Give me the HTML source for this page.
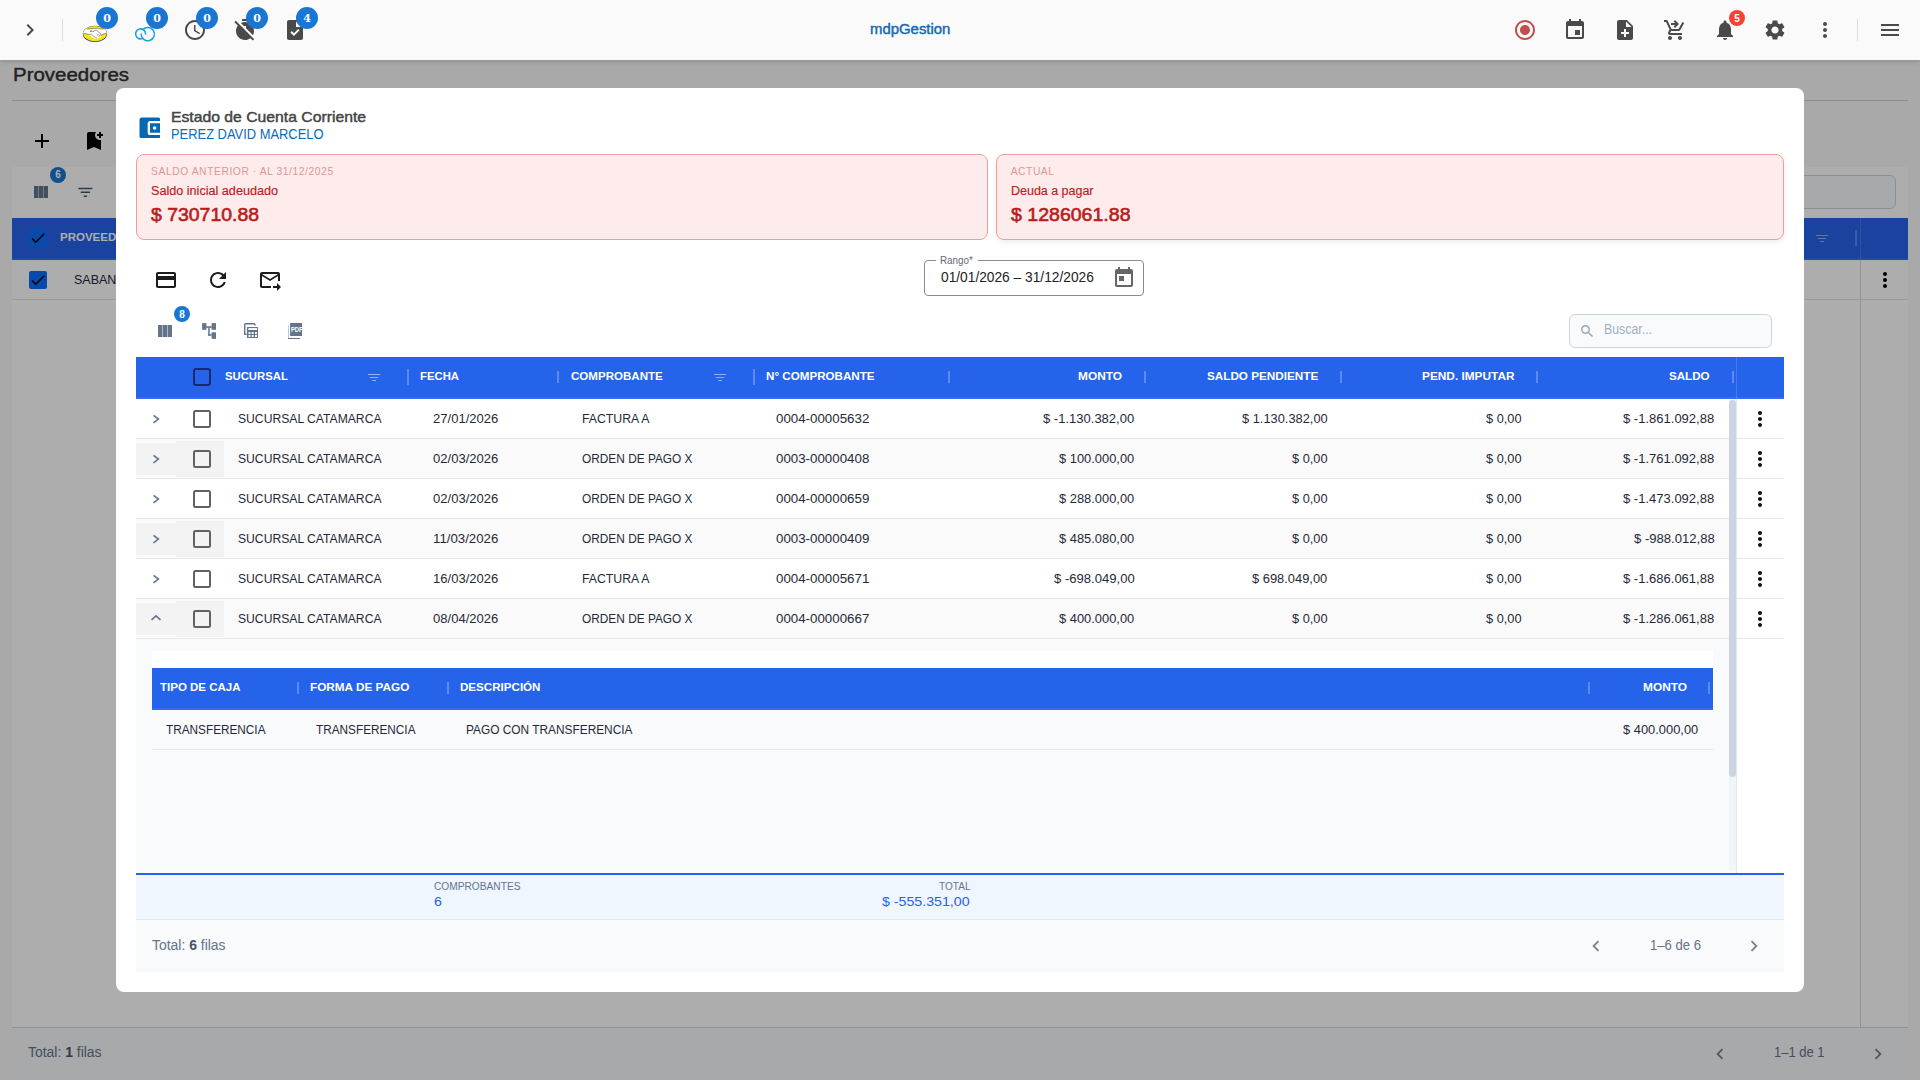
<!DOCTYPE html>
<html lang="es"><head><meta charset="utf-8"><title>mdpGestion - Proveedores</title>
<style>
html,body{margin:0;padding:0}
body{width:1920px;height:1080px;overflow:hidden;position:relative;background:#fafafa;font-family:"Liberation Sans",sans-serif;}
.t{position:absolute;white-space:nowrap;margin:0;padding:0;transform-origin:0 50%}
.b{position:absolute;box-sizing:border-box;display:block}
</style></head><body>
<div id="page">
<div class="t" style="left:12.80px;top:64px;font-size:18.5px;line-height:21px;color:#333;transform:scaleX(1.1059);-webkit-text-stroke:0.42px #333;">Proveedores</div>
<div class="b" style="left:12px;top:100px;width:1896px;height:1px;background:#cfcfcf;"></div>
<svg class="b" style="left:30px;top:129px;" width="24" height="24" viewBox="0 0 24 24" fill="#000"><path d="M19 13h-6v6h-2v-6H5v-2h6V5h2v6h6v2z"/></svg>
<svg class="b" style="left:82px;top:129px;" width="24" height="24" viewBox="0 0 24 24" fill="#000"><path d="M21 7h-2v2h-2V7h-2V5h2V3h2v2h2v2zm-2 14l-7-3-7 3V5c0-1.1.9-2 2-2h7c-.63.84-1 1.87-1 3 0 2.76 2.24 5 5 5 .34 0 .68-.03 1-.1V21z"/></svg>
<div class="b" style="left:12px;top:167px;width:1896px;height:51px;background:#ffffff;"></div>
<svg class="b" style="left:34px;top:186px" width="14" height="12" viewBox="0 0 14 12"><rect width="4.4" height="12" fill="#64748b"/><rect x="4.8" width="4.4" height="12" fill="#64748b"/><rect x="9.6" width="4.4" height="12" fill="#64748b"/></svg>
<div class="b" style="left:50px;top:166.7px;width:16px;height:16px;background:#1976d2;border-radius:8px;"></div>
<div class="t" style="left:55.30px;top:169px;font-size:10px;line-height:11px;color:#fff;font-weight:700;">6</div>
<svg class="b" style="left:75.7px;top:182.7px;" width="18.7" height="18.7" viewBox="0 0 24 24" fill="#475569"><path d="M10 18h4v-2h-4v2zM3 6v2h18V6H3zm3 7h12v-2H6v2z"/></svg>
<div class="b" style="left:1694px;top:175px;width:202px;height:34px;background:#f8fafc;border:1px solid #cbd5e1;border-radius:6px;"></div>
<div class="b" style="left:12px;top:218px;width:1896px;height:42px;background:#2563eb;"></div>
<div class="b" style="left:12px;top:258px;width:1896px;height:2px;background:rgba(255,255,255,.07);"></div>
<div class="b" style="left:29px;top:229px;width:18px;height:18px;background:#0d6efd;border-radius:2px;"></div>
<svg class="b" style="left:29px;top:229px;" width="18" height="18" viewBox="0 0 24 24" fill="#000"><path d="M9 16.17L4.83 12l-1.42 1.41L9 19 21 7l-1.410-1.410z"/></svg>
<div class="t" style="left:60.00px;top:231px;font-size:11px;line-height:12px;color:#fff;font-weight:700;transform:scaleX(1.0456);">PROVEEDOR</div>
<svg class="b" style="left:1816px;top:235px" width="13" height="8" viewBox="0 0 13 8" fill="rgba(255,255,255,.5)"><rect x="0" y="0" width="12.2" height="1"/><rect x="1.8" y="3" width="8.4" height="1"/><rect x="4.2" y="6" width="3.8" height="1"/></svg>
<div class="b" style="left:1855px;top:230px;width:2px;height:16px;background:rgba(255,255,255,.25);"></div>
<div class="b" style="left:1860px;top:218px;width:1px;height:42px;background:rgba(255,255,255,.12);"></div>
<div class="b" style="left:12px;top:299px;width:1896px;height:1px;background:#dde3ea;"></div>
<div class="b" style="left:29px;top:271px;width:18px;height:18px;background:#0d6efd;border-radius:2px;"></div>
<svg class="b" style="left:29px;top:271px;" width="18" height="18" viewBox="0 0 24 24" fill="#000"><path d="M9 16.17L4.83 12l-1.42 1.41L9 19 21 7l-1.410-1.410z"/></svg>
<div class="t" style="left:74.00px;top:273px;font-size:12px;line-height:14px;color:#1f2937;transform:scaleX(1.0401);">SABANA S.A.</div>
<div class="b" style="left:1860px;top:260px;width:1px;height:768px;background:#d5dbe3;"></div>
<svg class="b" style="left:1872.5px;top:267.5px;" width="24" height="24" viewBox="0 0 24 24" fill="#000"><path d="M12 8c1.1 0 2-.9 2-2s-.9-2-2-2-2 .9-2 2 .9 2 2 2zm0 2c-1.1 0-2 .9-2 2s.9 2 2 2 2-.9 2-2-.9-2-2-2zm0 6c-1.1 0-2 .9-2 2s.9 2 2 2 2-.9 2-2-.9-2-2-2z"/></svg>
<div class="b" style="left:12px;top:260px;width:1896px;height:39px;background:#ffffff;z-index:-1;"></div>
<div class="b" style="left:12px;top:300px;width:1896px;height:727px;background:#ffffff;z-index:-1;"></div>
<div class="b" style="left:12px;top:1027px;width:1896px;height:1px;background:#d5dbe3;"></div>
<div class="b" style="left:12px;top:1028px;width:1896px;height:52px;background:#f8fafc;z-index:-1;"></div>
<div class="t" style="left:27.80px;top:1044px;font-size:14px;line-height:16px;color:#64748b;transform:scaleX(0.9943);">Total: <b style="color:#475569">1</b> filas</div>
<svg class="b" style="left:1709px;top:1043px;" width="22" height="22" viewBox="0 0 24 24" fill="#7b8088"><path d="M15.41 7.41L14 6l-6 6 6 6 1.41-1.41L10.83 12z"/></svg>
<div class="t" style="left:1774.00px;top:1044px;font-size:14px;line-height:16px;color:#64748b;transform:scaleX(0.9266);">1–1 de 1</div>
<svg class="b" style="left:1867px;top:1043px;" width="22" height="22" viewBox="0 0 24 24" fill="#7b8088"><path d="M10 6L8.59 7.41 13.17 12l-4.58 4.59L10 18l6-6z"/></svg>
</div>
<div class="b" style="left:0px;top:0px;width:1920px;height:1080px;background:rgba(0,0,0,.32);"></div>
<div class="b" style="left:0px;top:0px;width:1920px;height:60px;background:#fafafa;box-shadow:0 1.5px 4px rgba(0,0,0,.14);"></div>
<svg class="b" style="left:18px;top:18px;" width="24" height="24" viewBox="0 0 24 24" fill="#4a4a4a"><path d="M10 6L8.59 7.41 13.17 12l-4.58 4.59L10 18l6-6z"/></svg>
<div class="b" style="left:62px;top:19px;width:1px;height:22px;background:#dcdcdc;"></div>
<svg class="b" style="left:80px;top:22px" width="30" height="24" viewBox="80 22 30 24">
<defs><clipPath id="mpc"><ellipse cx="94.950" cy="33.600" rx="11.700" ry="7.700"/></clipPath></defs>
<ellipse cx="94.950" cy="33.950" rx="12.100" ry="8.100" fill="#2a2f8a"/>
<ellipse cx="94.950" cy="33.600" rx="11.700" ry="7.700" fill="#fbe40a"/>
<g clip-path="url(#mpc)">
<path d="M82.480 29.330 L87.150 29.130 L92.070 28.560 L94.150 28.350 L98.300 28.350 L100.890 28.950 L103.480 29.130 L107.370 29.330 L107.370 32.960 L101.930 34.520 L100.890 36.590 L96.740 39.060 L94.150 38.670 L88.440 34.520 L83.780 33.220 L82.480 33.090Z" fill="#fff"/>
<path d="M90 31.410 L93.890 31.410 L94.670 30.370 L96.740 30.370 L100.890 34 L101.280 35.560M91.560 29.720 L90.780 31.410M88.190 34.390 L91.560 34.260 L95.190 37.630 L97 38.020M97.520 36.200 L98.300 34.130M98.950 36.720 L100.110 34.910M83.780 33.270 L88.190 34.390M101.280 35.560 L101.930 34.520 L106.850 33.020M87.150 29.130 L92.070 28.560 L94.150 28.350 L98.300 28.350 L100.890 28.950 L103.480 29.130" stroke="#55584a" stroke-width=".600" fill="none" stroke-linejoin="round"/>
</g></svg>
<svg class="b" style="left:132px;top:24px" width="26" height="20" viewBox="132 24 26 20" fill="none" stroke="#1a9fe0" stroke-width="1.550" stroke-linecap="round">
<path d="M142.740 38.420A5 5 0 1 1 145.600 33.900"/><path d="M141.150 34.100A6.650 6.650 0 1 0 142.990 29.510"/></svg>
<svg class="b" style="left:183px;top:18px;" width="24" height="24" viewBox="0 0 24 24" fill="#4a4a4a"><path d="M11.99 2C6.47 2 2 6.48 2 12s4.47 10 9.99 10C17.52 22 22 17.52 22 12S17.52 2 11.99 2zM12 20c-4.42 0-8-3.58-8-8s3.58-8 8-8 8 3.58 8 8-3.58 8-8 8zm.5-13H11v6l5.25 3.15.75-1.23-4.5-2.67z"/></svg>
<svg class="b" style="left:233px;top:18px;" width="24" height="24" viewBox="0 0 24 24" fill="#4a4a4a"><path d="M9 1h6v2H9zM13 8v2.17l6.980 6.980C20.630 15.910 21 14.500 21 13c0-2.120-.74-4.070-1.970-5.610l1.420-1.420c-.43-.51-.9-.99-1.410-1.410l-1.420 1.420C16.070 4.740 14.120 4 12 4c-1.500 0-2.910.37-4.150 1.020L10.830 8H13zM2.810 2.810L1.390 4.220l3.400 3.400C3.670 9.120 3 10.980 3 13c0 4.970 4.020 9 9 9 2.020 0 3.880-.67 5.380-1.790l2.400 2.400 1.410-1.410L2.810 2.810z"/></svg>
<svg class="b" style="left:283px;top:18px;" width="24" height="24" viewBox="0 0 24 24" fill="#4a4a4a"><path d="M14 2H6c-1.1 0-1.99.9-1.99 2L4 20c0 1.1.89 2 1.99 2H18c1.1 0 2-.9 2-2V8l-6-6zm-3.06 16L7.4 14.46l1.41-1.41 2.12 2.12 4.24-4.24 1.41 1.41L10.94 18zM13 9V3.5L18.5 9H13z"/></svg>
<div class="b" style="left:96px;top:7px;width:22px;height:22px;background:#1976d2;border-radius:11px;"></div>
<div class="t" style="left:96px;top:8px;width:22px;height:22px;line-height:22px;text-align:center;font-family:'DejaVu Serif',serif;font-weight:700;font-size:11px;color:#fff">0</div>
<div class="b" style="left:146px;top:7px;width:22px;height:22px;background:#1976d2;border-radius:11px;"></div>
<div class="t" style="left:146px;top:8px;width:22px;height:22px;line-height:22px;text-align:center;font-family:'DejaVu Serif',serif;font-weight:700;font-size:11px;color:#fff">0</div>
<div class="b" style="left:196px;top:7px;width:22px;height:22px;background:#1976d2;border-radius:11px;"></div>
<div class="t" style="left:196px;top:8px;width:22px;height:22px;line-height:22px;text-align:center;font-family:'DejaVu Serif',serif;font-weight:700;font-size:11px;color:#fff">0</div>
<div class="b" style="left:246px;top:7px;width:22px;height:22px;background:#1976d2;border-radius:11px;"></div>
<div class="t" style="left:246px;top:8px;width:22px;height:22px;line-height:22px;text-align:center;font-family:'DejaVu Serif',serif;font-weight:700;font-size:11px;color:#fff">0</div>
<div class="b" style="left:296px;top:7px;width:22px;height:22px;background:#1976d2;border-radius:11px;"></div>
<div class="t" style="left:296px;top:8px;width:22px;height:22px;line-height:22px;text-align:center;font-family:'DejaVu Serif',serif;font-weight:700;font-size:11px;color:#fff">4</div>
<div class="t" style="left:869.80px;top:21px;font-size:14px;line-height:16px;color:#1068b4;transform:scaleX(1.0651);-webkit-text-stroke:0.4px #1068b4;">mdpGestion</div>
<svg class="b" style="left:1513px;top:18px;" width="24" height="24" viewBox="0 0 24 24" fill="#c0504f"><path d="M12 7c-2.76 0-5 2.24-5 5s2.24 5 5 5 5-2.24 5-5-2.24-5-5-5zm0-5C6.48 2 2 6.48 2 12s4.48 10 10 10 10-4.48 10-10S17.52 2 12 2zm0 18c-4.42 0-8-3.58-8-8s3.58-8 8-8 8 3.58 8 8-3.58 8-8 8z"/></svg>
<svg class="b" style="left:1563px;top:18px;" width="24" height="24" viewBox="0 0 24 24" fill="#4a4a4a"><path d="M17 12h-5v5h5v-5zM16 1v2H8V1H6v2H5c-1.11 0-1.99.9-1.99 2L3 19c0 1.1.89 2 2 2h14c1.1 0 2-.9 2-2V5c0-1.1-.9-2-2-2h-1V1h-2zm3 18H5V8h14v11z"/></svg>
<svg class="b" style="left:1613px;top:18px;" width="24" height="24" viewBox="0 0 24 24" fill="#4a4a4a"><path d="M14 2H6c-1.1 0-1.99.9-1.99 2L4 20c0 1.1.89 2 1.99 2H18c1.1 0 2-.9 2-2V8l-6-6zm2 14h-3v3h-2v-3H8v-2h3v-3h2v3h3v2zm-3-7V3.5L18.5 9H13z"/></svg>
<svg class="b" style="left:1663px;top:18px;" width="24" height="24" viewBox="0 0 24 24" fill="#4a4a4a"><path d="M7 18c-1.1 0-1.99.9-1.99 2S5.9 22 7 22s2-.9 2-2-.9-2-2-2zm10 0c-1.1 0-1.99.9-1.99 2s.89 2 1.99 2 2-.9 2-2-.9-2-2-2zm-9.83-3.25l.03-.12.9-1.63h7.45c.75 0 1.41-.41 1.75-1.03l3.86-7.01L19.42 4l-3.87 7H8.53L4.27 2H1v2h2l3.6 7.59-1.35 2.44C4.52 15.37 5.48 17 7 17h12v-2H7.42c-.14 0-.25-.11-.25-.25zM12 2l4 4-4 4-1.41-1.41L12.17 7H8V5h4.17l-1.59-1.59L12 2z"/></svg>
<svg class="b" style="left:1713px;top:18px;" width="24" height="24" viewBox="0 0 24 24" fill="#4a4a4a"><path d="M12 22c1.1 0 2-.9 2-2h-4c0 1.1.89 2 2 2zm6-6v-5c0-3.07-1.64-5.64-4.5-6.32V4c0-.83-.67-1.5-1.5-1.5s-1.5.67-1.5 1.5v.68C7.63 5.36 6 7.92 6 11v5l-2 2v1h16v-1l-2-2z"/></svg>
<div class="b" style="left:1729px;top:10px;width:16px;height:16px;background:#f44336;border-radius:8px;"></div>
<div class="t" style="left:1734.30px;top:13px;font-size:10px;line-height:11px;color:#fff;font-weight:700;">5</div>
<svg class="b" style="left:1763px;top:18px;" width="24" height="24" viewBox="0 0 24 24" fill="#4a4a4a"><path d="M19.14 12.94c.04-.3.06-.61.06-.94 0-.32-.02-.64-.07-.94l2.03-1.58c.18-.14.23-.41.12-.61l-1.92-3.32c-.12-.22-.37-.29-.59-.22l-2.39.96c-.5-.38-1.03-.7-1.62-.94l-.36-2.54c-.04-.24-.24-.41-.48-.41h-3.84c-.24 0-.43.17-.47.41l-.36 2.54c-.59.24-1.13.57-1.62.94l-2.39-.96c-.22-.08-.47 0-.59.22L2.74 8.87c-.12.21-.08.47.12.61l2.03 1.58c-.05.3-.09.63-.09.94s.02.64.07.94l-2.03 1.58c-.18.14-.23.41-.12.61l1.92 3.32c.12.22.37.29.59.22l2.39-.96c.5.38 1.03.7 1.62.94l.36 2.54c.05.24.24.41.48.41h3.84c.24 0 .44-.17.47-.41l.36-2.54c.59-.24 1.13-.56 1.62-.94l2.39.96c.22.08.47 0 .59-.22l1.92-3.32c.12-.22.07-.47-.12-.61l-2.01-1.58zM12 15.6c-1.98 0-3.6-1.62-3.6-3.6s1.620-3.6 3.6-3.6 3.6 1.62 3.6 3.6-1.62 3.6-3.6 3.6z"/></svg>
<svg class="b" style="left:1813px;top:18px;" width="24" height="24" viewBox="0 0 24 24" fill="#4a4a4a"><path d="M12 8c1.1 0 2-.9 2-2s-.9-2-2-2-2 .9-2 2 .9 2 2 2zm0 2c-1.1 0-2 .9-2 2s.9 2 2 2 2-.9 2-2-.9-2-2-2zm0 6c-1.1 0-2 .9-2 2s.9 2 2 2 2-.9 2-2-.9-2-2-2z"/></svg>
<div class="b" style="left:1857px;top:19px;width:1px;height:22px;background:#dcdcdc;"></div>
<svg class="b" style="left:1878px;top:18px;" width="24" height="24" viewBox="0 0 24 24" fill="#4a4a4a"><path d="M3 18h18v-2H3v2zm0-5h18v-2H3v2zm0-7v2h18V6H3z"/></svg>
<div class="b" style="left:116px;top:88px;width:1688px;height:904px;background:#ffffff;border-radius:8px;"></div>
<div class="b" style="left:136px;top:114px;width:24px;height:24px;overflow:hidden">
<svg class="b" style="left:0px;top:-0.5px;" width="28" height="28" viewBox="0 0 24 24" fill="#0568b3"><path d="M21 18v1c0 1.1-.9 2-2 2H5c-1.11 0-2-.9-2-2V5c0-1.1.89-2 2-2h14c1.1 0 2 .9 2 2v1h-9c-1.11 0-2 .9-2 2v8c0 1.1.89 2 2 2h9zm-9-2h10V8H12v8zm4-2.5c-.83 0-1.5-.67-1.5-1.5s.67-1.5 1.5-1.5 1.5.67 1.500 1.5-.67 1.5-1.500 1.5z"/></svg>
</div>
<div class="t" style="left:170.80px;top:108px;font-size:15px;line-height:17px;color:#444;transform:scaleX(1.0487);-webkit-text-stroke:0.45px #444;">Estado de Cuenta Corriente</div>
<div class="t" style="left:171.00px;top:126px;font-size:14px;line-height:16px;color:#0a6bb8;transform:scaleX(0.9218);">PEREZ DAVID MARCELO</div>
<div class="b" style="left:136px;top:154px;width:852px;height:86px;background:#feebeb;border:1px solid #f29d9d;border-radius:8px;"></div>
<div class="b" style="left:996px;top:154px;width:788px;height:86px;background:#feebeb;border:1px solid #f29d9d;border-radius:8px;box-shadow:0 2px 6px rgba(0,0,0,.08);"></div>
<div class="t" style="left:151.10px;top:166px;font-size:10.3px;line-height:11px;color:#db9797;letter-spacing:0.566px;">SALDO ANTERIOR · AL 31/12/2025</div>
<div class="t" style="left:151.10px;top:184px;font-size:12px;line-height:14px;color:#b91c1c;transform:scaleX(1.0516);-webkit-text-stroke:0.15px #b91c1c;">Saldo inicial adeudado</div>
<div class="t" style="left:151.20px;top:204px;font-size:18.5px;line-height:21px;color:#b91c1c;transform:scaleX(1.0498);-webkit-text-stroke:0.6px #b91c1c;">$ 730710.88</div>
<div class="t" style="left:1010.70px;top:166px;font-size:10.3px;line-height:11px;color:#db9797;letter-spacing:0.535px;">ACTUAL</div>
<div class="t" style="left:1010.70px;top:184px;font-size:12px;line-height:14px;color:#b91c1c;transform:scaleX(1.0392);-webkit-text-stroke:0.15px #b91c1c;">Deuda a pagar</div>
<div class="t" style="left:1010.80px;top:204px;font-size:18.5px;line-height:21px;color:#b91c1c;transform:scaleX(1.0559);-webkit-text-stroke:0.6px #b91c1c;">$ 1286061.88</div>
<svg class="b" style="left:154px;top:268px;" width="24" height="24" viewBox="0 0 24 24" fill="#1c1c1c"><path d="M20 4H4c-1.11 0-1.99.89-1.99 2L2 18c0 1.11.89 2 2 2h16c1.11 0 2-.89 2-2V6c0-1.11-.89-2-2-2zm0 14H4v-6h16v6zm0-10H4V6h16v2z"/></svg>
<svg class="b" style="left:206px;top:268px;" width="24" height="24" viewBox="0 0 24 24" fill="#1c1c1c"><path d="M17.65 6.35C16.2 4.9 14.21 4 12 4c-4.42 0-7.99 3.58-7.99 8s3.57 8 7.99 8c3.73 0 6.84-2.55 7.73-6h-2.08c-.82 2.33-3.04 4-5.65 4-3.31 0-6-2.69-6-6s2.69-6 6-6c1.66 0 3.14.69 4.22 1.78L13 11h7V4l-2.35 2.35z"/></svg>
<svg class="b" style="left:258px;top:268px;" width="24" height="24" viewBox="0 0 24 24" fill="#1c1c1c"><path d="M20 4H4c-1.1 0-2 .9-2 2v12c0 1.1.9 2 2 2h9v-2H4V8l8 5 8-5v5h2V6c0-1.1-.9-2-2-2zm-8 7L4 6h16l-8 5zm7 4l4 4-4 4v-3h-4v-2h4v-3z"/></svg>
<div class="b" style="left:924px;top:260px;width:220px;height:36px;border:1px solid #8a8a8a;border-radius:4px;"></div>
<div class="b" style="left:936px;top:259px;width:42px;height:3px;background:#fff;"></div>
<div class="t" style="left:940.30px;top:254px;font-size:10.5px;line-height:12px;color:#5f6775;transform:scaleX(0.9335);">Rango*</div>
<div class="t" style="left:940.80px;top:269px;font-size:14px;line-height:16px;color:#222;transform:scaleX(0.9814);">01/01/2026 – 31/12/2026</div>
<svg class="b" style="left:1112px;top:266px;" width="24" height="24" viewBox="0 0 24 24" fill="#666"><path d="M19 3h-1V1h-2v2H8V1H6v2H5c-1.11 0-1.99.9-1.99 2L3 19c0 1.1.89 2 2 2h14c1.1 0 2-.9 2-2V5c0-1.1-.9-2-2-2zm0 16H5V8h14v11zM7 10h5v5H7z"/></svg>
<svg class="b" style="left:158px;top:325px" width="14" height="12" viewBox="0 0 14 12"><rect width="4.4" height="12" fill="#64748b"/><rect x="4.8" width="4.4" height="12" fill="#64748b"/><rect x="9.6" width="4.4" height="12" fill="#64748b"/></svg>
<div class="b" style="left:174px;top:306px;width:16px;height:16px;background:#1976d2;border-radius:8px;"></div>
<div class="t" style="left:179.30px;top:309px;font-size:10px;line-height:11px;color:#fff;font-weight:700;">8</div>
<svg class="b" style="left:202px;top:323px" width="14" height="16" viewBox="0 0 14 16" fill="#64748b">
<rect x="0.100" y="0.100" width="4.300" height="6.700"/><rect x="9.600" y="0.100" width="4.400" height="6.700"/><rect x="9.600" y="9.300" width="4.400" height="6.500"/>
<rect x="4.300" y="3.200" width="5.400" height="1.700"/><rect x="6.200" y="4.800" width="1.500" height="7.900"/><rect x="6.200" y="11.100" width="3.500" height="1.600"/></svg>
<svg class="b" style="left:244px;top:323px" width="14" height="15" viewBox="0 0 14 15">
<path d="M2.500 11.300H.7V1.500A.8.800 0 0 1 1.500.7h8.500a1 1 0 0 1 1 1v.9" fill="none" stroke="#64748b" stroke-width="1.400"/>
<rect x="2.900" y="4" width="11.100" height="11" rx=".6" fill="#64748b"/>
<rect x="4.400" y="5.100" width="8.700" height="1.900" fill="#fff"/>
<rect x="4.500" y="9.100" width="2" height="1.900" fill="#fff"/><rect x="7.700" y="9.100" width="2" height="1.900" fill="#fff"/><rect x="11" y="9.100" width="2" height="1.900" fill="#fff"/>
<rect x="4.500" y="12" width="2" height="2" fill="#fff"/><rect x="7.700" y="12" width="2" height="2" fill="#fff"/><rect x="11" y="12" width="2" height="2" fill="#fff"/></svg>
<svg class="b" style="left:288px;top:323px;overflow:hidden" width="14" height="16" viewBox="0 0 14 16">
<rect x="2.100" y="0" width="11.900" height="13" fill="#64748b"/>
<rect x="0" y="3" width=".7" height="13" fill="#9db4d0"/><rect x="0" y="15" width="12" height="1" fill="#64748b"/>
<text x="3" y="9" font-family="Liberation Sans, sans-serif" font-size="7" font-weight="700" fill="#fff" textLength="11.600" lengthAdjust="spacingAndGlyphs">PDF</text></svg>
<div class="b" style="left:1569px;top:314px;width:203px;height:34px;background:#f8fafc;border:1px solid #cbd5e1;border-radius:6px;"></div>
<svg class="b" style="left:1579.3px;top:322.6px;" width="16.5" height="16.5" viewBox="0 0 24 24" fill="#94a3b8"><path d="M15.5 14h-.79l-.28-.27C15.41 12.59 16 11.11 16 9.5 16 5.91 13.09 3 9.5 3S3 5.91 3 9.5 5.91 16 9.5 16c1.61 0 3.09-.59 4.23-1.57l.27.28v.79l5 4.990L20.49 19l-4.990-5zm-6 0C7.01 14 5 11.99 5 9.5S7.01 5 9.5 5 14 7.01 14 9.5 11.99 14 9.500 14z"/></svg>
<div class="t" style="left:1604.30px;top:321px;font-size:14px;line-height:16px;color:#a3afc0;transform:scaleX(0.8812);">Buscar...</div>
<div class="b" style="left:136px;top:357px;width:1648px;height:42px;background:#2563eb;"></div>
<div class="b" style="left:1736px;top:357px;width:1px;height:42px;background:rgba(255,255,255,.15);"></div>
<div class="b" style="left:193px;top:368px;width:18px;height:18px;border:2px solid #172b6b;border-radius:3px;"></div>
<div class="t" style="left:224.50px;top:370px;font-size:11px;line-height:12px;color:#fff;font-weight:700;transform:scaleX(1.0277);">SUCURSAL</div>
<div class="t" style="left:420.30px;top:370px;font-size:11px;line-height:12px;color:#fff;font-weight:700;transform:scaleX(1.0293);">FECHA</div>
<div class="t" style="left:570.70px;top:370px;font-size:11px;line-height:12px;color:#fff;font-weight:700;transform:scaleX(1.0505);">COMPROBANTE</div>
<div class="t" style="left:765.70px;top:370px;font-size:11px;line-height:12px;color:#fff;font-weight:700;transform:scaleX(1.0566);">N° COMPROBANTE</div>
<div class="t" style="left:1078.40px;top:370px;font-size:11px;line-height:12px;color:#fff;font-weight:700;transform:scaleX(1.0802);">MONTO</div>
<div class="t" style="left:1207.10px;top:370px;font-size:11px;line-height:12px;color:#fff;font-weight:700;transform:scaleX(1.0640);">SALDO PENDIENTE</div>
<div class="t" style="left:1421.90px;top:370px;font-size:11px;line-height:12px;color:#fff;font-weight:700;transform:scaleX(1.0760);">PEND. IMPUTAR</div>
<div class="t" style="left:1668.60px;top:370px;font-size:11px;line-height:12px;color:#fff;font-weight:700;transform:scaleX(1.0545);">SALDO</div>
<div class="b" style="left:407px;top:369px;width:2px;height:16px;background:rgba(255,255,255,.25);"></div>
<div class="b" style="left:753px;top:369px;width:2px;height:16px;background:rgba(255,255,255,.25);"></div>
<div class="b" style="left:557px;top:371px;width:2px;height:12px;background:rgba(255,255,255,.25);"></div>
<div class="b" style="left:948px;top:371px;width:2px;height:12px;background:rgba(255,255,255,.25);"></div>
<div class="b" style="left:1144px;top:371px;width:2px;height:12px;background:rgba(255,255,255,.25);"></div>
<div class="b" style="left:1340px;top:371px;width:2px;height:12px;background:rgba(255,255,255,.25);"></div>
<div class="b" style="left:1536px;top:371px;width:2px;height:12px;background:rgba(255,255,255,.25);"></div>
<div class="b" style="left:1731.5px;top:371px;width:2px;height:12px;background:rgba(255,255,255,.25);"></div>
<div class="b" style="left:136px;top:397px;width:1648px;height:2px;background:rgba(255,255,255,.07);"></div>
<svg class="b" style="left:367.8px;top:374px" width="13" height="8" viewBox="0 0 13 8" fill="rgba(255,255,255,.5)"><rect x="0" y="0" width="12.2" height="1"/><rect x="1.8" y="3" width="8.4" height="1"/><rect x="4.2" y="6" width="3.8" height="1"/></svg>
<svg class="b" style="left:713.8px;top:374px" width="13" height="8" viewBox="0 0 13 8" fill="rgba(255,255,255,.5)"><rect x="0" y="0" width="12.2" height="1"/><rect x="1.8" y="3" width="8.4" height="1"/><rect x="4.2" y="6" width="3.8" height="1"/></svg>
<div class="b" style="left:136px;top:438px;width:1648px;height:1px;background:#e2e8f0;"></div>
<svg class="b" style="left:152px;top:414px" width="9" height="11" viewBox="0 0 9 11" fill="none" stroke="#64748b" stroke-width="1.600"><path d="M1.500 1.400L6.400 5.100L1.500 8.800"/></svg>
<div class="b" style="left:193px;top:410px;width:18px;height:18px;border:2px solid #616161;border-radius:2.5px;"></div>
<div class="t" style="left:237.80px;top:412px;font-size:12px;line-height:14px;color:#1f2937;transform:scaleX(1.0120);">SUCURSAL CATAMARCA</div>
<div class="t" style="left:432.50px;top:412px;font-size:12px;line-height:14px;color:#1f2937;transform:scaleX(1.0872);">27/01/2026</div>
<div class="t" style="left:582.00px;top:412px;font-size:12px;line-height:14px;color:#1f2937;transform:scaleX(1.0225);">FACTURA A</div>
<div class="t" style="left:775.50px;top:412px;font-size:12px;line-height:14px;color:#1f2937;transform:scaleX(1.1097);">0004-00005632</div>
<div class="t" style="left:1043.30px;top:412px;font-size:12px;line-height:14px;color:#1f2937;transform:scaleX(1.0847);">$ -1.130.382,00</div>
<div class="t" style="left:1241.80px;top:412px;font-size:12px;line-height:14px;color:#1f2937;transform:scaleX(1.0702);">$ 1.130.382,00</div>
<div class="t" style="left:1486.00px;top:412px;font-size:12px;line-height:14px;color:#1f2937;transform:scaleX(1.0642);">$ 0,00</div>
<div class="t" style="left:1623.30px;top:412px;font-size:12px;line-height:14px;color:#1f2937;transform:scaleX(1.0847);">$ -1.861.092,88</div>
<svg class="b" style="left:1748.4px;top:407px;" width="24" height="24" viewBox="0 0 24 24" fill="#111"><path d="M12 8c1.1 0 2-.9 2-2s-.9-2-2-2-2 .9-2 2 .9 2 2 2zm0 2c-1.1 0-2 .9-2 2s.9 2 2 2 2-.9 2-2-.9-2-2-2zm0 6c-1.1 0-2 .9-2 2s.9 2 2 2 2-.9 2-2-.9-2-2-2z"/></svg>
<div class="b" style="left:136px;top:439px;width:1601px;height:39px;background:#fafafa;"></div>
<div class="b" style="left:136px;top:443px;width:40px;height:32px;background:#f3f3f3;"></div>
<div class="b" style="left:176px;top:441px;width:48px;height:36px;background:#f3f3f3;"></div>
<div class="b" style="left:136px;top:478px;width:1648px;height:1px;background:#e2e8f0;"></div>
<svg class="b" style="left:152px;top:454px" width="9" height="11" viewBox="0 0 9 11" fill="none" stroke="#64748b" stroke-width="1.600"><path d="M1.500 1.400L6.400 5.100L1.500 8.800"/></svg>
<div class="b" style="left:193px;top:450px;width:18px;height:18px;border:2px solid #616161;border-radius:2.5px;"></div>
<div class="t" style="left:237.80px;top:452px;font-size:12px;line-height:14px;color:#1f2937;transform:scaleX(1.0120);">SUCURSAL CATAMARCA</div>
<div class="t" style="left:432.50px;top:452px;font-size:12px;line-height:14px;color:#1f2937;transform:scaleX(1.0872);">02/03/2026</div>
<div class="t" style="left:582.00px;top:452px;font-size:12px;line-height:14px;color:#1f2937;transform:scaleX(0.9884);">ORDEN DE PAGO X</div>
<div class="t" style="left:775.50px;top:452px;font-size:12px;line-height:14px;color:#1f2937;transform:scaleX(1.1097);">0003-00000408</div>
<div class="t" style="left:1059.30px;top:452px;font-size:12px;line-height:14px;color:#1f2937;transform:scaleX(1.0733);">$ 100.000,00</div>
<div class="t" style="left:1292.00px;top:452px;font-size:12px;line-height:14px;color:#1f2937;transform:scaleX(1.0642);">$ 0,00</div>
<div class="t" style="left:1486.00px;top:452px;font-size:12px;line-height:14px;color:#1f2937;transform:scaleX(1.0642);">$ 0,00</div>
<div class="t" style="left:1623.30px;top:452px;font-size:12px;line-height:14px;color:#1f2937;transform:scaleX(1.0847);">$ -1.761.092,88</div>
<svg class="b" style="left:1748.4px;top:447px;" width="24" height="24" viewBox="0 0 24 24" fill="#111"><path d="M12 8c1.1 0 2-.9 2-2s-.9-2-2-2-2 .9-2 2 .9 2 2 2zm0 2c-1.1 0-2 .9-2 2s.9 2 2 2 2-.9 2-2-.9-2-2-2zm0 6c-1.1 0-2 .9-2 2s.9 2 2 2 2-.9 2-2-.9-2-2-2z"/></svg>
<div class="b" style="left:136px;top:518px;width:1648px;height:1px;background:#e2e8f0;"></div>
<svg class="b" style="left:152px;top:494px" width="9" height="11" viewBox="0 0 9 11" fill="none" stroke="#64748b" stroke-width="1.600"><path d="M1.500 1.400L6.400 5.100L1.500 8.800"/></svg>
<div class="b" style="left:193px;top:490px;width:18px;height:18px;border:2px solid #616161;border-radius:2.5px;"></div>
<div class="t" style="left:237.80px;top:492px;font-size:12px;line-height:14px;color:#1f2937;transform:scaleX(1.0120);">SUCURSAL CATAMARCA</div>
<div class="t" style="left:432.50px;top:492px;font-size:12px;line-height:14px;color:#1f2937;transform:scaleX(1.0872);">02/03/2026</div>
<div class="t" style="left:582.00px;top:492px;font-size:12px;line-height:14px;color:#1f2937;transform:scaleX(0.9884);">ORDEN DE PAGO X</div>
<div class="t" style="left:775.50px;top:492px;font-size:12px;line-height:14px;color:#1f2937;transform:scaleX(1.1097);">0004-00000659</div>
<div class="t" style="left:1059.30px;top:492px;font-size:12px;line-height:14px;color:#1f2937;transform:scaleX(1.0733);">$ 288.000,00</div>
<div class="t" style="left:1292.00px;top:492px;font-size:12px;line-height:14px;color:#1f2937;transform:scaleX(1.0642);">$ 0,00</div>
<div class="t" style="left:1486.00px;top:492px;font-size:12px;line-height:14px;color:#1f2937;transform:scaleX(1.0642);">$ 0,00</div>
<div class="t" style="left:1623.30px;top:492px;font-size:12px;line-height:14px;color:#1f2937;transform:scaleX(1.0847);">$ -1.473.092,88</div>
<svg class="b" style="left:1748.4px;top:487px;" width="24" height="24" viewBox="0 0 24 24" fill="#111"><path d="M12 8c1.1 0 2-.9 2-2s-.9-2-2-2-2 .9-2 2 .9 2 2 2zm0 2c-1.1 0-2 .9-2 2s.9 2 2 2 2-.9 2-2-.9-2-2-2zm0 6c-1.1 0-2 .9-2 2s.9 2 2 2 2-.9 2-2-.9-2-2-2z"/></svg>
<div class="b" style="left:136px;top:519px;width:1601px;height:39px;background:#fafafa;"></div>
<div class="b" style="left:136px;top:523px;width:40px;height:32px;background:#f3f3f3;"></div>
<div class="b" style="left:176px;top:521px;width:48px;height:36px;background:#f3f3f3;"></div>
<div class="b" style="left:136px;top:558px;width:1648px;height:1px;background:#e2e8f0;"></div>
<svg class="b" style="left:152px;top:534px" width="9" height="11" viewBox="0 0 9 11" fill="none" stroke="#64748b" stroke-width="1.600"><path d="M1.500 1.400L6.400 5.100L1.500 8.800"/></svg>
<div class="b" style="left:193px;top:530px;width:18px;height:18px;border:2px solid #616161;border-radius:2.5px;"></div>
<div class="t" style="left:237.80px;top:532px;font-size:12px;line-height:14px;color:#1f2937;transform:scaleX(1.0120);">SUCURSAL CATAMARCA</div>
<div class="t" style="left:432.50px;top:532px;font-size:12px;line-height:14px;color:#1f2937;transform:scaleX(1.1036);">11/03/2026</div>
<div class="t" style="left:582.00px;top:532px;font-size:12px;line-height:14px;color:#1f2937;transform:scaleX(0.9884);">ORDEN DE PAGO X</div>
<div class="t" style="left:775.50px;top:532px;font-size:12px;line-height:14px;color:#1f2937;transform:scaleX(1.1097);">0003-00000409</div>
<div class="t" style="left:1059.30px;top:532px;font-size:12px;line-height:14px;color:#1f2937;transform:scaleX(1.0733);">$ 485.080,00</div>
<div class="t" style="left:1292.00px;top:532px;font-size:12px;line-height:14px;color:#1f2937;transform:scaleX(1.0642);">$ 0,00</div>
<div class="t" style="left:1486.00px;top:532px;font-size:12px;line-height:14px;color:#1f2937;transform:scaleX(1.0642);">$ 0,00</div>
<div class="t" style="left:1633.80px;top:532px;font-size:12px;line-height:14px;color:#1f2937;transform:scaleX(1.0896);">$ -988.012,88</div>
<svg class="b" style="left:1748.4px;top:527px;" width="24" height="24" viewBox="0 0 24 24" fill="#111"><path d="M12 8c1.1 0 2-.9 2-2s-.9-2-2-2-2 .9-2 2 .9 2 2 2zm0 2c-1.1 0-2 .9-2 2s.9 2 2 2 2-.9 2-2-.9-2-2-2zm0 6c-1.1 0-2 .9-2 2s.9 2 2 2 2-.9 2-2-.9-2-2-2z"/></svg>
<div class="b" style="left:136px;top:598px;width:1648px;height:1px;background:#e2e8f0;"></div>
<svg class="b" style="left:152px;top:574px" width="9" height="11" viewBox="0 0 9 11" fill="none" stroke="#64748b" stroke-width="1.600"><path d="M1.500 1.400L6.400 5.100L1.500 8.800"/></svg>
<div class="b" style="left:193px;top:570px;width:18px;height:18px;border:2px solid #616161;border-radius:2.5px;"></div>
<div class="t" style="left:237.80px;top:572px;font-size:12px;line-height:14px;color:#1f2937;transform:scaleX(1.0120);">SUCURSAL CATAMARCA</div>
<div class="t" style="left:432.50px;top:572px;font-size:12px;line-height:14px;color:#1f2937;transform:scaleX(1.0872);">16/03/2026</div>
<div class="t" style="left:582.00px;top:572px;font-size:12px;line-height:14px;color:#1f2937;transform:scaleX(1.0225);">FACTURA A</div>
<div class="t" style="left:775.50px;top:572px;font-size:12px;line-height:14px;color:#1f2937;transform:scaleX(1.1097);">0004-00005671</div>
<div class="t" style="left:1053.80px;top:572px;font-size:12px;line-height:14px;color:#1f2937;transform:scaleX(1.0896);">$ -698.049,00</div>
<div class="t" style="left:1252.30px;top:572px;font-size:12px;line-height:14px;color:#1f2937;transform:scaleX(1.0733);">$ 698.049,00</div>
<div class="t" style="left:1486.00px;top:572px;font-size:12px;line-height:14px;color:#1f2937;transform:scaleX(1.0642);">$ 0,00</div>
<div class="t" style="left:1623.30px;top:572px;font-size:12px;line-height:14px;color:#1f2937;transform:scaleX(1.0847);">$ -1.686.061,88</div>
<svg class="b" style="left:1748.4px;top:567px;" width="24" height="24" viewBox="0 0 24 24" fill="#111"><path d="M12 8c1.1 0 2-.9 2-2s-.9-2-2-2-2 .9-2 2 .9 2 2 2zm0 2c-1.1 0-2 .9-2 2s.9 2 2 2 2-.9 2-2-.9-2-2-2zm0 6c-1.1 0-2 .9-2 2s.9 2 2 2 2-.9 2-2-.9-2-2-2z"/></svg>
<div class="b" style="left:136px;top:599px;width:1601px;height:39px;background:#fafafa;"></div>
<div class="b" style="left:136px;top:603px;width:40px;height:32px;background:#f3f3f3;"></div>
<div class="b" style="left:176px;top:601px;width:48px;height:36px;background:#f3f3f3;"></div>
<div class="b" style="left:136px;top:638px;width:1648px;height:1px;background:#e2e8f0;"></div>
<svg class="b" style="left:150px;top:614px" width="13" height="8" viewBox="0 0 13 8" fill="none" stroke="#64748b" stroke-width="1.600"><path d="M1.500 5.900L6 1.900L10.500 5.900"/></svg>
<div class="b" style="left:193px;top:610px;width:18px;height:18px;border:2px solid #616161;border-radius:2.5px;"></div>
<div class="t" style="left:237.80px;top:612px;font-size:12px;line-height:14px;color:#1f2937;transform:scaleX(1.0120);">SUCURSAL CATAMARCA</div>
<div class="t" style="left:432.50px;top:612px;font-size:12px;line-height:14px;color:#1f2937;transform:scaleX(1.0872);">08/04/2026</div>
<div class="t" style="left:582.00px;top:612px;font-size:12px;line-height:14px;color:#1f2937;transform:scaleX(0.9884);">ORDEN DE PAGO X</div>
<div class="t" style="left:775.50px;top:612px;font-size:12px;line-height:14px;color:#1f2937;transform:scaleX(1.1097);">0004-00000667</div>
<div class="t" style="left:1059.30px;top:612px;font-size:12px;line-height:14px;color:#1f2937;transform:scaleX(1.0733);">$ 400.000,00</div>
<div class="t" style="left:1292.00px;top:612px;font-size:12px;line-height:14px;color:#1f2937;transform:scaleX(1.0642);">$ 0,00</div>
<div class="t" style="left:1486.00px;top:612px;font-size:12px;line-height:14px;color:#1f2937;transform:scaleX(1.0642);">$ 0,00</div>
<div class="t" style="left:1623.30px;top:612px;font-size:12px;line-height:14px;color:#1f2937;transform:scaleX(1.0847);">$ -1.286.061,88</div>
<svg class="b" style="left:1748.4px;top:607px;" width="24" height="24" viewBox="0 0 24 24" fill="#111"><path d="M12 8c1.1 0 2-.9 2-2s-.9-2-2-2-2 .9-2 2 .9 2 2 2zm0 2c-1.1 0-2 .9-2 2s.9 2 2 2 2-.9 2-2-.9-2-2-2zm0 6c-1.1 0-2 .9-2 2s.9 2 2 2 2-.9 2-2-.9-2-2-2z"/></svg>
<div class="b" style="left:136px;top:639px;width:1601px;height:234px;background:#f8fafc;"></div>
<div class="b" style="left:152px;top:651px;width:1561px;height:17px;background:#fff;"></div>
<div class="b" style="left:152px;top:668px;width:1561px;height:42px;background:#2563eb;"></div>
<div class="b" style="left:152px;top:708px;width:1561px;height:2px;background:rgba(255,255,255,.07);"></div>
<div class="b" style="left:152px;top:710px;width:1561px;height:1px;background:#fff;"></div>
<div class="t" style="left:160.20px;top:681px;font-size:11px;line-height:12px;color:#fff;font-weight:700;transform:scaleX(1.0452);">TIPO DE CAJA</div>
<div class="t" style="left:309.80px;top:681px;font-size:11px;line-height:12px;color:#fff;font-weight:700;transform:scaleX(1.0690);">FORMA DE PAGO</div>
<div class="t" style="left:459.80px;top:681px;font-size:11px;line-height:12px;color:#fff;font-weight:700;transform:scaleX(1.0536);">DESCRIPCIÓN</div>
<div class="t" style="left:1642.50px;top:681px;font-size:11px;line-height:12px;color:#fff;font-weight:700;transform:scaleX(1.0802);">MONTO</div>
<div class="b" style="left:297px;top:682px;width:2px;height:12px;background:rgba(255,255,255,.25);"></div>
<div class="b" style="left:447px;top:682px;width:2px;height:12px;background:rgba(255,255,255,.25);"></div>
<div class="b" style="left:1588px;top:682px;width:2px;height:12px;background:rgba(255,255,255,.25);"></div>
<div class="b" style="left:1708px;top:682px;width:2px;height:12px;background:rgba(255,255,255,.25);"></div>
<div class="t" style="left:166.30px;top:723px;font-size:12px;line-height:14px;color:#1f2937;transform:scaleX(0.9818);">TRANSFERENCIA</div>
<div class="t" style="left:316.30px;top:723px;font-size:12px;line-height:14px;color:#1f2937;transform:scaleX(0.9818);">TRANSFERENCIA</div>
<div class="t" style="left:466.30px;top:723px;font-size:12px;line-height:14px;color:#1f2937;transform:scaleX(0.9896);">PAGO CON TRANSFERENCIA</div>
<div class="t" style="left:1623.30px;top:723px;font-size:12px;line-height:14px;color:#1f2937;transform:scaleX(1.0733);">$ 400.000,00</div>
<div class="b" style="left:152px;top:749px;width:1561px;height:1px;background:#e2e8f0;"></div>
<div class="b" style="left:1729px;top:399px;width:7px;height:472px;background:#f1f5f9;border-radius:0 0 3.5px 3.5px;"></div>
<div class="b" style="left:1736px;top:399px;width:1px;height:474px;background:#e2e8f0;"></div>
<div class="b" style="left:1729px;top:400px;width:7px;height:377px;background:#cbd5e1;border-radius:3.500px;"></div>
<div class="b" style="left:136px;top:873px;width:1648px;height:2px;background:#2563eb;"></div>
<div class="b" style="left:136px;top:875px;width:1648px;height:44px;background:#eff6ff;"></div>
<div class="b" style="left:136px;top:919px;width:1648px;height:1px;background:#e2e8f0;"></div>
<div class="t" style="left:433.50px;top:881px;font-size:10px;line-height:11px;color:#64748b;transform:scaleX(1.0175);">COMPROBANTES</div>
<div class="t" style="left:434.00px;top:894px;font-size:13.5px;line-height:15px;color:#2563eb;transform:scaleX(1.05);">6</div>
<div class="t" style="left:938.50px;top:881px;font-size:10px;line-height:11px;color:#64748b;transform:scaleX(1.0065);">TOTAL</div>
<div class="t" style="left:882.40px;top:894px;font-size:13.5px;line-height:15px;color:#2563eb;transform:scaleX(1.0513);">$ -555.351,00</div>
<div class="b" style="left:136px;top:920px;width:1648px;height:52px;background:#f8fafc;"></div>
<div class="t" style="left:151.80px;top:937px;font-size:14px;line-height:16px;color:#64748b;transform:scaleX(0.9943);">Total: <b style="color:#475569">6</b> filas</div>
<svg class="b" style="left:1585px;top:935px;" width="22" height="22" viewBox="0 0 24 24" fill="#7b8088"><path d="M15.41 7.41L14 6l-6 6 6 6 1.41-1.41L10.83 12z"/></svg>
<div class="t" style="left:1649.80px;top:937px;font-size:14px;line-height:16px;color:#64748b;transform:scaleX(0.9358);">1–6 de 6</div>
<svg class="b" style="left:1743px;top:935px;" width="22" height="22" viewBox="0 0 24 24" fill="#7b8088"><path d="M10 6L8.59 7.41 13.17 12l-4.58 4.59L10 18l6-6z"/></svg>
</body></html>
